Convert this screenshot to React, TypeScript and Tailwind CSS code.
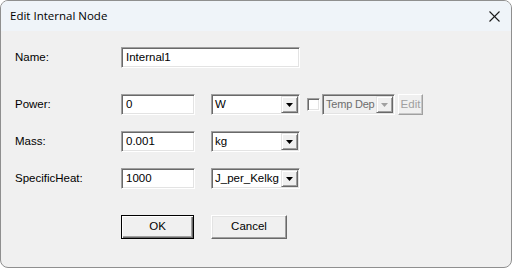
const font = 'font-["Liberation_Sans",Arial,sans-serif]';

function Sunken({ className = '', children }: { className?: string; children?: React.ReactNode }) {
  return (
    <div
      className={`flex items-center border border-t-[#a0a0a0] border-l-[#a0a0a0] border-b-white border-r-white shadow-[inset_1px_1px_0_#696969,inset_-1px_-1px_0_#e3e3e3] ${className}`}
    >
      {children}
    </div>
  );
}

function TextBox({ value, width }: { value: string; width: string }) {
  return (
    <Sunken className={`${width} h-[21px] bg-white pl-[4px] text-[11.5px] text-black`}>
      <span className="leading-none">{value}</span>
    </Sunken>
  );
}

function Arrow({ disabled }: { disabled?: boolean }) {
  return (
    <div className="mr-[1px] flex h-[17px] w-[17px] shrink-0 items-center justify-center border border-t-[#e3e3e3] border-l-[#e3e3e3] border-b-[#696969] border-r-[#696969] bg-[#f0f0f0] shadow-[inset_1px_1px_0_#ffffff,inset_-1px_-1px_0_#a0a0a0]">
      <svg width="7" height="4" viewBox="0 0 7 4">
        <polygon points="0,0 7,0 3.5,4" fill={disabled ? '#a0a0a0' : '#000000'} />
      </svg>
    </div>
  );
}

function Combo({ value, width, disabled }: { value: string; width: string; disabled?: boolean }) {
  return (
    <Sunken
      className={`${width} h-[21px] justify-between pl-[3px] ${
        disabled ? 'bg-[#f0f0f0] text-[11px] tracking-[-0.2px] text-[#6d6d6d]' : 'bg-white text-[11.5px] text-black'
      }`}
    >
      <span className="whitespace-nowrap leading-none">{value}</span>
      <Arrow disabled={disabled} />
    </Sunken>
  );
}

function Button({ label, isDefault, width }: { label: string; isDefault?: boolean; width: string }) {
  return (
    <div
      className={`${width} flex h-[24px] items-center justify-center bg-[#f0f0f0] text-[11.5px] text-black ${
        isDefault
          ? 'border border-[#000000] shadow-[inset_1px_1px_0_#ffffff,inset_-1px_-1px_0_#696969,inset_-2px_-2px_0_#a0a0a0]'
          : 'border border-t-white border-l-white border-b-[#696969] border-r-[#696969] shadow-[inset_-1px_-1px_0_#a0a0a0,inset_1px_1px_0_#e3e3e3]'
      }`}
    >
      {label}
    </div>
  );
}

function Row({ label, children, className = '' }: { label: string; children: React.ReactNode; className?: string }) {
  return (
    <div className={`flex items-center ${className}`}>
      <div className="w-[106px] text-[11.5px] text-black">{label}</div>
      {children}
    </div>
  );
}

export default function App() {
  return (
    <div className={`h-[268px] w-[512px] overflow-hidden rounded-[8px] border border-[#8f8f8f] bg-[#f0f0f0] ${font}`}>
      <div className="flex h-[30px] items-center justify-between bg-[#eff4f9] pl-[9px] pr-[11px]">
        <span className='font-["Open_Sans",sans-serif] text-[11.5px] text-black'>Edit Internal Node</span>
        <svg width="11" height="11" viewBox="0 0 11 11" stroke="#1a1a1a" strokeWidth="1.1">
          <line x1="0.5" y1="0.5" x2="10.5" y2="10.5" />
          <line x1="10.5" y1="0.5" x2="0.5" y2="10.5" />
        </svg>
      </div>

      <div className="flex flex-col pl-[14px]">
        <Row label="Name:" className="mt-[16px]">
          <TextBox value="Internal1" width="w-[179px]" />
        </Row>

        <Row label="Power:" className="mt-[26px]">
          <TextBox value="0" width="w-[74px]" />
          <div className="ml-[16px]">
            <Combo value="W" width="w-[89px]" />
          </div>
          <div className="ml-[7px] h-[13px] w-[13px] border border-t-[#a0a0a0] border-l-[#a0a0a0] border-b-white border-r-white bg-white shadow-[inset_1px_1px_0_#696969,inset_-1px_-1px_0_#e3e3e3]" />
          <div className="ml-[2px]">
            <Combo value="Temp Dep" width="w-[73px]" disabled />
          </div>
          <div className="ml-[3px] flex h-[21px] w-[25px] items-center justify-center border border-t-white border-l-white border-b-[#a0a0a0] border-r-[#a0a0a0] text-[11.5px] text-[#a0a0a0] shadow-[inset_-1px_-1px_0_#c8c8c8]">
            Edit
          </div>
        </Row>

        <Row label="Mass:" className="mt-[16px]">
          <TextBox value="0.001" width="w-[74px]" />
          <div className="ml-[16px]">
            <Combo value="kg" width="w-[89px]" />
          </div>
        </Row>

        <Row label="SpecificHeat:" className="mt-[16px]">
          <TextBox value="1000" width="w-[74px]" />
          <div className="ml-[16px]">
            <Combo value="J_per_Kelkg" width="w-[89px]" />
          </div>
        </Row>

        <div className="ml-[106px] mt-[26px] flex gap-[17px]">
          <Button label="OK" isDefault width="w-[73px]" />
          <Button label="Cancel" width="w-[76px]" />
        </div>
      </div>
    </div>
  );
}
